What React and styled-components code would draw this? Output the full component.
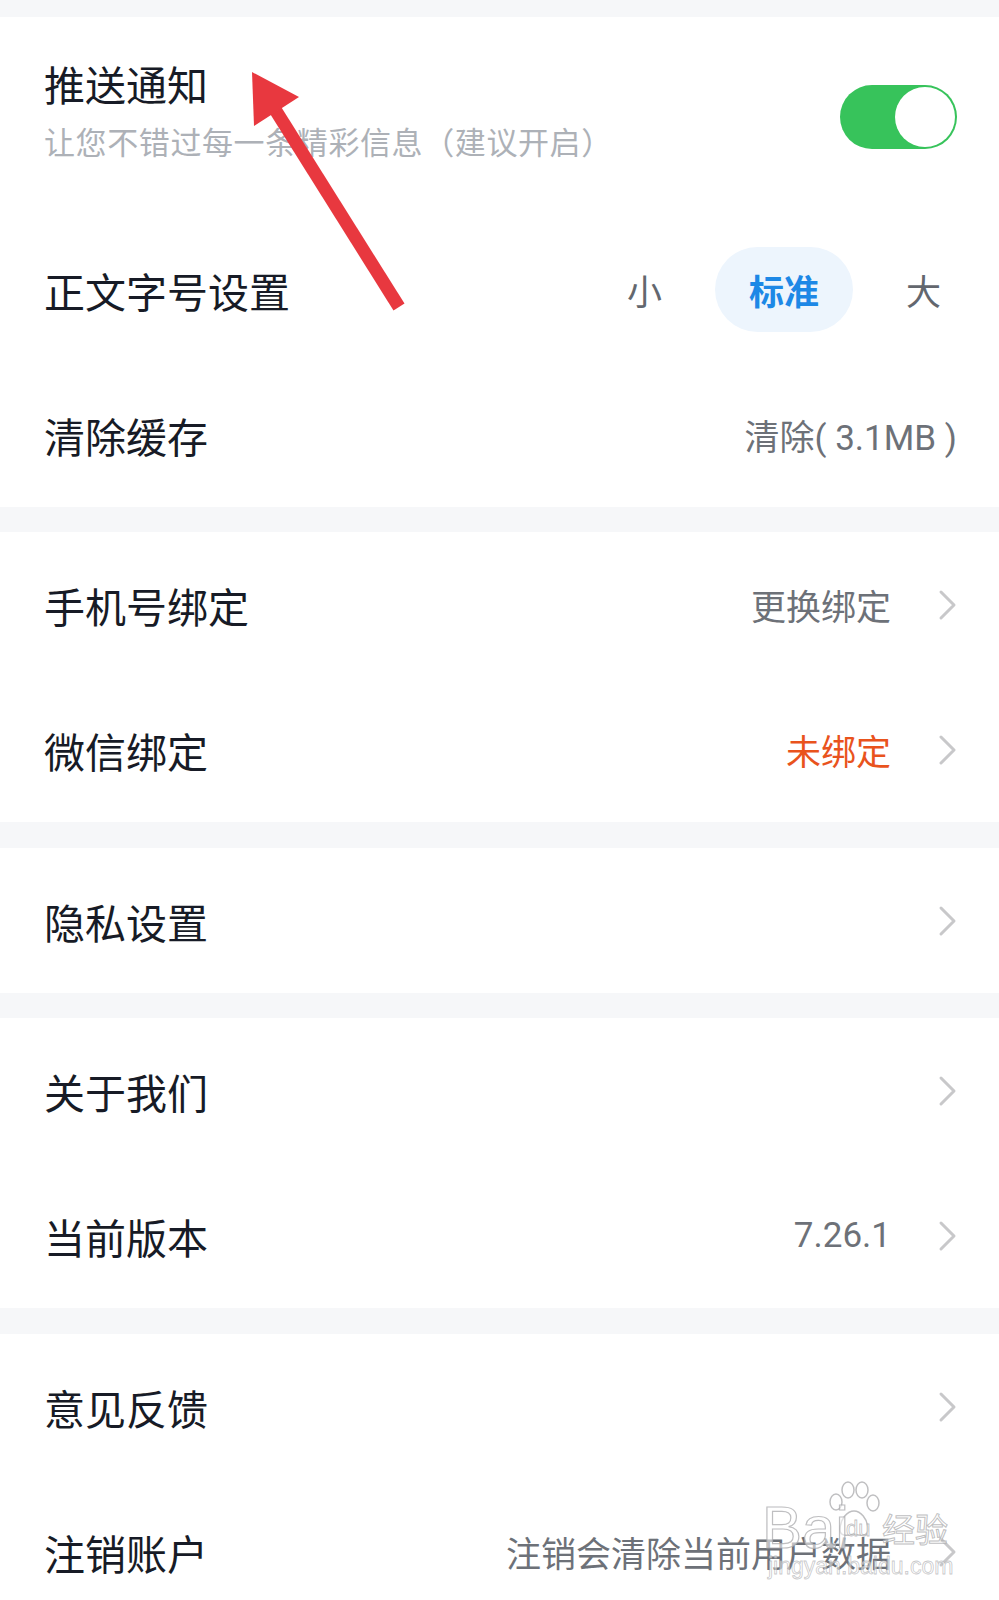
import React from "react";
import styled, { createGlobalStyle } from "styled-components";

const Global = createGlobalStyle`
  html, body { margin: 0; padding: 0; background: #ffffff; }
  body { font-family: "Noto Sans CJK SC", "Noto Sans", sans-serif; -webkit-font-smoothing: antialiased; }
`;

const Page = styled.div`
  position: relative;
  width: 999px;
  display: flex;
  flex-direction: column;
  background: #ffffff;
  overflow: hidden;
`;

const Band = styled.div`
  height: ${(p) => p.$h}px;
  background: #f6f7f9;
  flex: none;
`;

const Section = styled.section`
  display: flex;
  flex-direction: column;
  background: #ffffff;
`;

const Row = styled.div`
  height: ${(p) => p.$h || 145}px;
  box-sizing: border-box;
  padding: 0 42px 0 44px;
  display: flex;
  align-items: center;
  justify-content: space-between;
`;

const TopRow = styled(Row)`
  align-items: flex-start;
`;

const TextBlock = styled.div`
  display: flex;
  flex-direction: column;
  padding-top: 42px;
`;

const Title = styled.div`
  font-size: 41px;
  line-height: 48px;
  color: #171b26;
  white-space: nowrap;
`;

const Sub = styled.div`
  margin-top: 16px;
  font-size: 31px;
  line-height: 36px;
  letter-spacing: 0.6px;
  color: #adb1b7;
  white-space: nowrap;
`;

const Toggle = styled.div`
  align-self: center;
  width: 117px;
  height: 64px;
  border-radius: 32px;
  background: #37c35b;
  box-sizing: border-box;
  padding: 2px;
  display: flex;
  justify-content: flex-end;
`;

const Knob = styled.div`
  width: 60px;
  height: 60px;
  border-radius: 50%;
  background: #ffffff;
`;

const Options = styled.div`
  display: flex;
  align-items: center;
  gap: 37px;
`;

const Option = styled.div`
  height: 85px;
  display: flex;
  align-items: center;
  justify-content: center;
  box-sizing: border-box;
  padding: 0 ${(p) => (p.$active ? 34 : 16)}px;
  border-radius: 43px;
  background: ${(p) => (p.$active ? "#edf5fd" : "transparent")};
  color: ${(p) => (p.$active ? "#1d88e6" : "#63676e")};
  font-size: 35px;
  font-weight: ${(p) => (p.$active ? 700 : 400)};
`;

const Right = styled.div`
  display: flex;
  align-items: center;
  gap: 47px;
`;

const Value = styled.span`
  font-family: Roboto, "Noto Sans CJK SC", sans-serif;
  font-size: 35px;
  color: ${(p) => p.$color || "#6d7178"};
  white-space: nowrap;
`;

const Chevron = styled.svg`
  width: 19px;
  height: 32px;
  flex: none;
  display: block;
`;

const Arrow = styled.svg`
  position: absolute;
  left: 0;
  top: 0;
  width: 999px;
  height: 400px;
  pointer-events: none;
`;

const Watermark = styled.div`
  position: absolute;
  left: 760px;
  top: 1476px;
  width: 200px;
  height: 110px;
  pointer-events: none;
`;

const WmBai = styled.span`
  position: absolute;
  left: 2px;
  top: 22px;
  font-family: "Liberation Sans", sans-serif;
  font-size: 60px;
  line-height: 60px;
  color: rgba(255, 255, 255, 0.55);
  -webkit-text-stroke: 1.2px rgba(170, 170, 172, 0.75);
`;

const WmDu = styled.span`
  position: absolute;
  left: 86px;
  top: 42px;
  font-family: "Liberation Sans", sans-serif;
  font-size: 22px;
  line-height: 22px;
  color: rgba(255, 255, 255, 0.55);
  -webkit-text-stroke: 0.8px rgba(170, 170, 172, 0.75);
`;

const WmJy = styled.span`
  position: absolute;
  left: 122px;
  top: 33px;
  font-size: 33px;
  line-height: 38px;
  color: rgba(255, 255, 255, 0.55);
  -webkit-text-stroke: 1px rgba(170, 170, 172, 0.75);
`;

const WmUrl = styled.span`
  position: absolute;
  left: 8px;
  top: 78px;
  font-family: "Liberation Sans", sans-serif;
  font-size: 23px;
  line-height: 24px;
  color: rgba(255, 255, 255, 0.5);
  -webkit-text-stroke: 0.8px rgba(175, 175, 178, 0.7);
`;

const Paw = styled.svg`
  position: absolute;
  left: 66px;
  top: 4px;
  width: 56px;
  height: 58px;
`;

const Chev = () => (
  <Chevron viewBox="0 0 19 32">
    <polyline points="3,3 16,16 3,29" fill="none" stroke="#c8c8ca" strokeWidth="3" strokeLinecap="round" strokeLinejoin="round" />
  </Chevron>
);

const Nav = ({ title, value, color }) => (
  <Row>
    <Title>{title}</Title>
    <Right>
      {value && <Value $color={color}>{value}</Value>}
      <Chev />
    </Right>
  </Row>
);

export default function App() {
  return (
    <>
      <Global />
      <Page>
        <Band $h={17} />
        <Section>
          <TopRow $h={200}>
            <TextBlock>
              <Title>推送通知</Title>
              <Sub>让您不错过每一条精彩信息（建议开启）</Sub>
            </TextBlock>
            <Toggle>
              <Knob />
            </Toggle>
          </TopRow>
          <Row>
            <Title>正文字号设置</Title>
            <Options>
              <Option>小</Option>
              <Option $active>标准</Option>
              <Option>大</Option>
            </Options>
          </Row>
          <Row>
            <Title>清除缓存</Title>
            <Value>清除( 3.1MB )</Value>
          </Row>
        </Section>
        <Band $h={25} />
        <Section>
          <Nav title="手机号绑定" value="更换绑定" />
          <Nav title="微信绑定" value="未绑定" color="#e9531d" />
        </Section>
        <Band $h={26} />
        <Section>
          <Nav title="隐私设置" />
        </Section>
        <Band $h={25} />
        <Section>
          <Nav title="关于我们" />
          <Nav title="当前版本" value="7.26.1" />
        </Section>
        <Band $h={26} />
        <Section>
          <Nav title="意见反馈" />
          <Nav title="注销账户" value="注销会清除当前用户数据" />
        </Section>

        <Arrow viewBox="0 0 999 400">
          <line x1="276" y1="111" x2="399" y2="307" stroke="#e8383f" strokeWidth="13" />
          <polygon points="252,72 254,126 299,97" fill="#e8383f" />
        </Arrow>

        <Watermark>
          <Paw viewBox="0 0 56 58">
            <g fill="none" stroke="rgba(170,170,172,0.75)" strokeWidth="1.5">
              <ellipse cx="10" cy="22" rx="6" ry="8" />
              <ellipse cx="22" cy="10" rx="6" ry="8" />
              <ellipse cx="36" cy="10" rx="6" ry="8" />
              <ellipse cx="47" cy="23" rx="6" ry="8" />
              <path d="M14 50 C14 38 22 31 28 31 C34 31 42 38 42 50 C42 56 36 56 28 54 C20 56 14 56 14 50 Z" />
            </g>
          </Paw>
          <WmBai>Bai</WmBai>
          <WmDu>du</WmDu>
          <WmJy>经验</WmJy>
          <WmUrl>jingyan.baidu.com</WmUrl>
        </Watermark>
      </Page>
    </>
  );
}
